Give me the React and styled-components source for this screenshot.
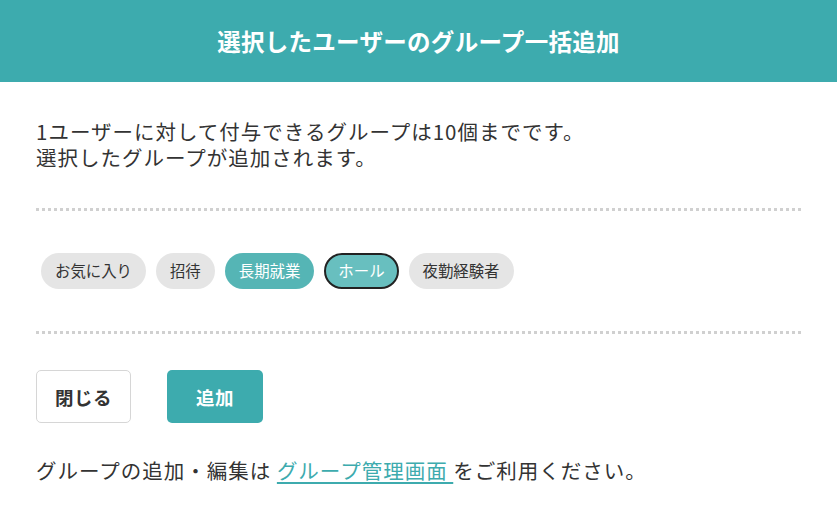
import React from "react";
import styled, { createGlobalStyle } from "styled-components";

const TEAL = "#3dabae";

const Global = createGlobalStyle`
  html, body { margin: 0; padding: 0; background: #fff; }
  body { font-family: "Noto Sans CJK JP", "Noto Sans", sans-serif; color: #333; }
  * { box-sizing: border-box; }
`;

const Dialog = styled.div`
  width: 837px;
  height: 519px;
  background: #fff;
  display: flex;
  flex-direction: column;
`;

const Header = styled.header`
  height: 82px;
  background: ${TEAL};
  color: #fff;
  display: flex;
  align-items: center;
  justify-content: center;
  font-size: 23.5px;
  font-weight: 700;
  letter-spacing: 0.3px;
`;

const Body = styled.div`
  padding: 36px 35px 0 36px;
  display: flex;
  flex-direction: column;
`;

const Lead = styled.p`
  margin: 0;
  font-size: 20.5px;
  line-height: 26px;
  letter-spacing: 1px;
  color: #333;
`;

const Divider = styled.hr`
  margin: ${(p) => p.$top}px 0 0;
  border: 0;
  height: 3px;
  background-image: linear-gradient(to right, #d0d0d0 3px, transparent 3px);
  background-size: 6px 3px;
  background-repeat: repeat-x;
`;

const ChipRow = styled.div`
  display: flex;
  flex-wrap: wrap;
  gap: 10px;
  padding: 42px 0 42px 5px;
`;

const Chip = styled.button`
  height: 36px;
  padding: 0 ${(p) => (p.$focus ? 12 : 14)}px;
  border-radius: 18px;
  font-family: inherit;
  font-size: 15.4px;
  line-height: 1;
  border: ${(p) => (p.$focus ? "2px solid #222" : "0")};
  background: ${(p) => (p.$focus ? "#68bfbf" : p.$selected ? "#55b5b5" : "#e5e5e5")};
  color: ${(p) => (p.$selected || p.$focus ? "#fff" : "#333")};
  display: inline-flex;
  align-items: center;
  justify-content: center;
  cursor: pointer;
`;

const Actions = styled.div`
  display: flex;
  gap: 36px;
  padding-top: 36px;
`;

const Button = styled.button`
  height: 53px;
  width: ${(p) => p.$w}px;
  border-radius: 5px;
  font-family: inherit;
  font-size: 18.5px;
  font-weight: 700;
  letter-spacing: 0.5px;
  border: ${(p) => (p.$primary ? "0" : "1px solid #d6d6d6")};
  background: ${(p) => (p.$primary ? TEAL : "#fff")};
  color: ${(p) => (p.$primary ? "#fff" : "#333")};
  cursor: pointer;
`;

const Footer = styled.p`
  margin: 34px 0 0;
  font-size: 20.5px;
  line-height: 26px;
  letter-spacing: 1px;
  color: #333;
`;

const Link = styled.a`
  color: ${TEAL};
  text-decoration: underline;
  text-underline-offset: 3px;
  text-decoration-thickness: 1.5px;
`;

const chips = [
  { label: "お気に入り" },
  { label: "招待" },
  { label: "長期就業", selected: true },
  { label: "ホール", focus: true },
  { label: "夜勤経験者" },
];

export default function App() {
  return (
    <>
      <Global />
      <Dialog>
        <Header>選択したユーザーのグループ一括追加</Header>
        <Body>
          <Lead>
            1ユーザーに対して付与できるグループは10個までです。
            <br />
            選択したグループが追加されます。
          </Lead>
          <Divider $top={38} />
          <ChipRow>
            {chips.map((c) => (
              <Chip key={c.label} $selected={c.selected} $focus={c.focus}>
                {c.label}
              </Chip>
            ))}
          </ChipRow>
          <Divider $top={0} />
          <Actions>
            <Button $w={95}>閉じる</Button>
            <Button $w={96} $primary>
              追加
            </Button>
          </Actions>
          <Footer>
            グループの追加・編集は <Link href="#">グループ管理画面 </Link>をご利用ください。
          </Footer>
        </Body>
      </Dialog>
    </>
  );
}
